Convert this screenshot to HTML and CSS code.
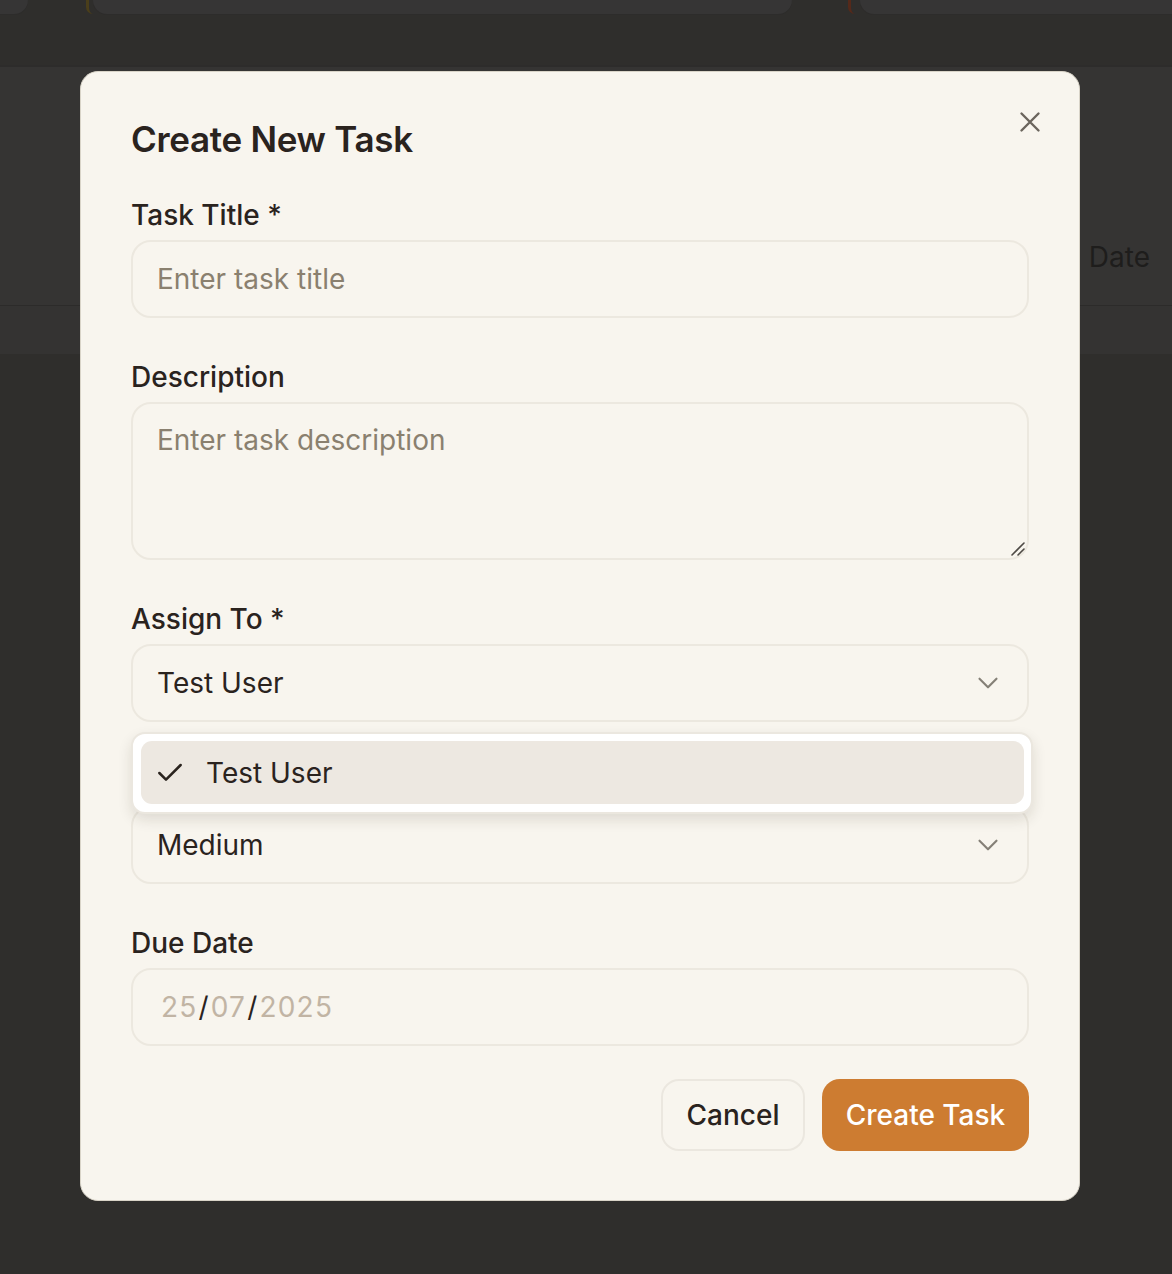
FILE: index.html
```html
<!DOCTYPE html>
<html lang="en">
<head>
<meta charset="utf-8">
<title>Create New Task</title>
<link rel="stylesheet" href="styles.css">
</head>
<body>
<div class="page">
  <div class="cards">
    <div class="card c1"></div>
    <div class="ring r1"></div>
    <div class="card c2"></div>
    <div class="ring r2"></div>
    <div class="card c3"></div>
  </div>
  <div class="table">
    <div class="thead"><span class="th-date">Date</span></div>
    <div class="trow"></div>
  </div>
</div>

<div class="overlay">
  <div class="modal">
    <button class="close" type="button" aria-label="Close">
      <svg viewBox="0 0 24 24" width="34" height="34" fill="none" stroke="currentColor" stroke-width="1.7" stroke-linecap="round"><path d="M18 6 6 18M6 6l12 12"/></svg>
    </button>
    <h2 class="title">Create New Task</h2>
    <div class="form">
      <div class="field">
        <label class="label">Task Title *</label>
        <input class="input" type="text" placeholder="Enter task title">
      </div>
      <div class="field">
        <label class="label">Description</label>
        <div class="ta-wrap">
          <textarea class="textarea" placeholder="Enter task description"></textarea>
          <svg class="grip" viewBox="0 0 16 16" width="16" height="16" fill="none" stroke="#4e4a45" stroke-width="1.6" stroke-linecap="round"><path d="M2 14 14 2M8 14l6-6"/></svg>
        </div>
      </div>
      <div class="field">
        <label class="label">Assign To *</label>
        <div class="select">
          <span>Test User</span>
          <svg class="chev" viewBox="0 0 24 24" width="34" height="34" fill="none" stroke="currentColor" stroke-width="1.5" stroke-linecap="round" stroke-linejoin="round"><path d="m6 9 6 6 6-6"/></svg>
        </div>
        <div class="popup">
          <div class="option">
            <svg viewBox="0 0 24 24" width="32" height="32" fill="none" stroke="currentColor" stroke-width="1.9" stroke-linecap="round" stroke-linejoin="round"><path d="M20 6 9 17l-5-5"/></svg>
            <span>Test User</span>
          </div>
        </div>
      </div>
      <div class="field">
        <label class="label">Priority</label>
        <div class="select">
          <span>Medium</span>
          <svg class="chev" viewBox="0 0 24 24" width="34" height="34" fill="none" stroke="currentColor" stroke-width="1.5" stroke-linecap="round" stroke-linejoin="round"><path d="m6 9 6 6 6-6"/></svg>
        </div>
      </div>
      <div class="field">
        <label class="label">Due Date</label>
        <div class="input date">
          <span class="dg">25</span><span class="sl">/</span><span class="dg">07</span><span class="sl">/</span><span class="dg">2025</span>
        </div>
      </div>
    </div>
    <div class="actions">
      <button class="btn btn-cancel" type="button">Cancel</button>
      <button class="btn btn-primary" type="button">Create Task</button>
    </div>
  </div>
</div>
</body>
</html>
```

FILE: styles.css
```css
* { box-sizing: border-box; }
html, body {
  margin: 0;
  height: 100%;
}
body {
  background: #2f2e2c;
  font-family: Inter, "Noto Sans", sans-serif;
  color: #2a241f;
  overflow: hidden;
}

/* background page (dimmed) */
.page {
  height: 1274px;
}
.cards {
  display: flex;
  height: 14px;
  align-items: stretch;
}
.card {
  background: #363535;
  border-radius: 0 0 18px 18px;
  box-shadow: 0 1px 0 #2d2c2b;
}
.c1 { width: 48px; margin-left: -20px; }
.c2 { width: 699px; }
.c3 { flex: 1; margin-right: -20px; margin-left: 5px; }
.ring {
  width: 7px;
  margin-top: -20px;
  border-left: 3px solid #4a3e1a;
  border-radius: 0 0 0 12px;
  margin-left: 58px;
}
.r2 {
  border-left-color: #55291a;
  margin-left: 56px;
}

.table {
  margin-top: 51px;
  background: #353433;
  border-top: 2px solid #2d2c2b;
}
.thead {
  height: 239px;
  border-bottom: 1px solid #2c2b2a;
  display: flex;
  align-items: flex-end;
  justify-content: flex-end;
  padding: 0 22px 28px 0;
}
.th-date {
  font-size: 28px;
  line-height: 40px;
  color: #1e1d1c;
}
.trow {
  height: 48px;
  background: #343332;
}

/* overlay + modal */
.overlay {
  position: fixed;
  inset: 0;
  display: flex;
  justify-content: center;
  align-items: flex-start;
  padding-top: 71px;
  padding-right: 12px;
}
.modal {
  position: relative;
  width: 1000px;
  height: 1130px;
  background: #f8f5ee;
  border: 1px solid #d9d4c8;
  border-radius: 18px;
  padding: 49px 50px;
  display: flex;
  flex-direction: column;
}
.close {
  position: absolute;
  top: 32.5px;
  right: 32px;
  width: 34px;
  height: 34px;
  padding: 0;
  border: 0;
  background: none;
  color: #6b655d;
  display: flex;
}
.title {
  margin: 0 0 38px;
  font-size: 35px;
  line-height: 36px;
  font-weight: 600;
  letter-spacing: -0.3px;
  color: #2a231e;
}
.form {
  display: flex;
  flex-direction: column;
  gap: 39px;
}
.field {
  position: relative;
  display: flex;
  flex-direction: column;
}
.label {
  font-size: 28px;
  line-height: 40px;
  font-weight: 500;
  color: #2a231e;
  margin-bottom: 5px;
}
.input, .textarea, .select {
  width: 100%;
  font-family: inherit;
  font-size: 28px;
  color: #2a231e;
  background: #f8f5ee;
  border: 2px solid #ece8df;
  border-radius: 20px;
  outline: none;
}
.input {
  height: 78px;
  padding: 0 24px;
  display: flex;
  align-items: center;
}
.input::placeholder, .textarea::placeholder {
  color: #8a806f;
  opacity: 1;
}
.ta-wrap {
  position: relative;
}
.textarea {
  height: 158px;
  padding: 16px 24px;
  line-height: 40px;
  resize: none;
  display: block;
}
.grip {
  position: absolute;
  right: 3px;
  bottom: 3px;
}
.select {
  height: 78px;
  padding: 0 22px 0 24px;
  display: flex;
  align-items: center;
  justify-content: space-between;
}
.chev { color: #858077; }

.popup {
  position: absolute;
  left: 0;
  right: -4px;
  top: calc(100% + 10px);
  z-index: 5;
  background: #ffffff;
  border: 2px solid #ebe7df;
  border-radius: 14px;
  padding: 7px 7px 8px 8px;
  box-shadow: 0 6px 14px rgba(40, 30, 20, 0.12);
}
.option {
  height: 63px;
  background: #ede8e1;
  border-radius: 11px;
  display: flex;
  align-items: center;
  gap: 20px;
  padding-left: 13px;
  font-size: 28px;
  color: #2a231e;
}
.option svg { color: #2a231e; }

.date {
  padding-left: 28px;
  letter-spacing: 1.2px;
}
.dg { color: #c1b4a4; }
.sl { color: #2a231e; padding: 0 1px; }

.actions {
  margin-top: 33px;
  display: flex;
  justify-content: flex-end;
  gap: 17px;
}
.btn {
  height: 72px;
  font-family: inherit;
  font-size: 28px;
  font-weight: 500;
  border-radius: 18px;
  padding: 0 20px;
  cursor: pointer;
}
.btn-cancel {
  background: #f8f5ee;
  border: 2px solid #ebe7df;
  color: #2a231e;
  width: 144px;
}
.btn-primary {
  background: #cd7c31;
  border: 0;
  color: #ffffff;
  width: 207px;
}
```
